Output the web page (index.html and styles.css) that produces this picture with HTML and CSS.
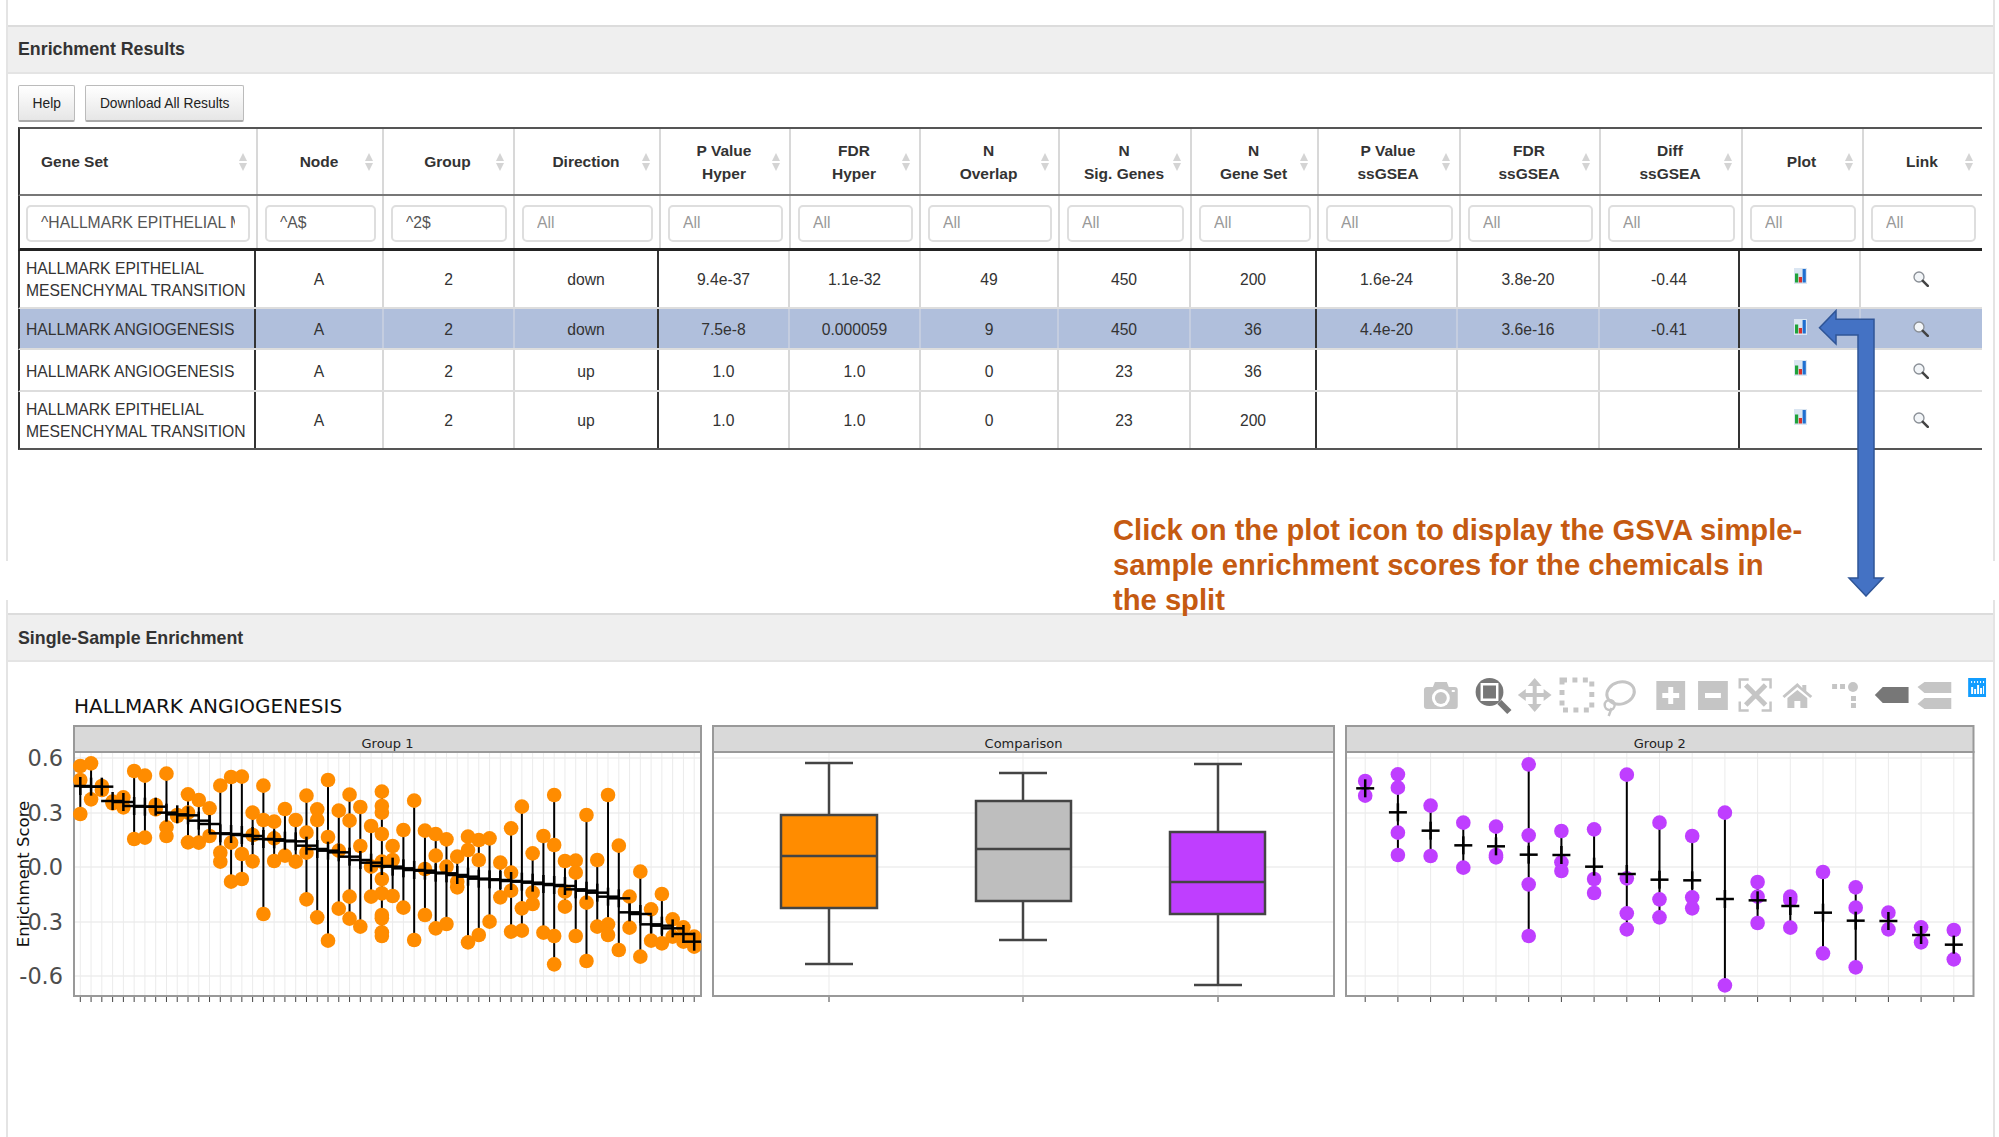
FILE: index.html
```html
<!DOCTYPE html>
<html lang="en">
<head>
    <meta charset="UTF-8">
    <title>Enrichment Results</title>
    <link rel="stylesheet" href="styles.css">
</head>
<body>

    <div class="panel panel-top">
        <div class="panel-heading">Enrichment Results</div>
        <div class="panel-body">
            <div class="btn-row">
                <button class="btn">Help</button>
                <button class="btn">Download All Results</button>
            </div>

            <div class="dt">
                <div class="dt-head">
                    <div class="th th-left sort">Gene Set</div>
                    <div class="th sort">Node</div>
                    <div class="th sort">Group</div>
                    <div class="th sort">Direction</div>
                    <div class="th sort">P Value<br>Hyper</div>
                    <div class="th sort">FDR<br>Hyper</div>
                    <div class="th sort">N<br>Overlap</div>
                    <div class="th sort">N<br>Sig. Genes</div>
                    <div class="th sort">N<br>Gene Set</div>
                    <div class="th sort">P Value<br>ssGSEA</div>
                    <div class="th sort">FDR<br>ssGSEA</div>
                    <div class="th sort">Diff<br>ssGSEA</div>
                    <div class="th sort">Plot</div>
                    <div class="th sort">Link</div>
                </div>
                <div class="dt-head dt-filter">
                    <div class="fc"><input class="fi fi-wide" value="^HALLMARK EPITHELIAL MESENCHYMAL TRANSITION$"></div>
                    <div class="fc"><input class="fi" value="^A$"></div>
                    <div class="fc"><input class="fi" value="^2$"></div>
                    <div class="fc"><input class="fi" placeholder="All"></div>
                    <div class="fc"><input class="fi" placeholder="All"></div>
                    <div class="fc"><input class="fi" placeholder="All"></div>
                    <div class="fc"><input class="fi" placeholder="All"></div>
                    <div class="fc"><input class="fi" placeholder="All"></div>
                    <div class="fc"><input class="fi" placeholder="All"></div>
                    <div class="fc"><input class="fi" placeholder="All"></div>
                    <div class="fc"><input class="fi" placeholder="All"></div>
                    <div class="fc"><input class="fi" placeholder="All"></div>
                    <div class="fc"><input class="fi" placeholder="All"></div>
                    <div class="fc"><input class="fi" placeholder="All"></div>
                </div>

                <div class="dt-row row-tall">
                    <div class="td td-left">HALLMARK EPITHELIAL MESENCHYMAL TRANSITION</div>
                    <div class="td">A</div><div class="td">2</div><div class="td">down</div>
                    <div class="td">9.4e-37</div><div class="td">1.1e-32</div><div class="td">49</div><div class="td">450</div><div class="td">200</div>
                    <div class="td">1.6e-24</div><div class="td">3.8e-20</div><div class="td">-0.44</div>
                    <div class="td"><svg class="ico-plot" viewBox="0 0 13 16"><use href="#plot-icon"/></svg></div>
                    <div class="td"><svg class="ico-find" viewBox="0 0 16 16"><use href="#find-icon"/></svg></div>
                </div>
                <div class="dt-row row-sel">
                    <div class="td td-left">HALLMARK ANGIOGENESIS</div>
                    <div class="td">A</div><div class="td">2</div><div class="td">down</div>
                    <div class="td">7.5e-8</div><div class="td">0.000059</div><div class="td">9</div><div class="td">450</div><div class="td">36</div>
                    <div class="td">4.4e-20</div><div class="td">3.6e-16</div><div class="td">-0.41</div>
                    <div class="td"><svg class="ico-plot" viewBox="0 0 13 16"><use href="#plot-icon"/></svg></div>
                    <div class="td"><svg class="ico-find" viewBox="0 0 16 16"><use href="#find-icon"/></svg></div>
                </div>
                <div class="dt-row row-short">
                    <div class="td td-left">HALLMARK ANGIOGENESIS</div>
                    <div class="td">A</div><div class="td">2</div><div class="td">up</div>
                    <div class="td">1.0</div><div class="td">1.0</div><div class="td">0</div><div class="td">23</div><div class="td">36</div>
                    <div class="td"></div><div class="td"></div><div class="td"></div>
                    <div class="td"><svg class="ico-plot" viewBox="0 0 13 16"><use href="#plot-icon"/></svg></div>
                    <div class="td"><svg class="ico-find" viewBox="0 0 16 16"><use href="#find-icon"/></svg></div>
                </div>
                <div class="dt-row row-tall row-last">
                    <div class="td td-left">HALLMARK EPITHELIAL MESENCHYMAL TRANSITION</div>
                    <div class="td">A</div><div class="td">2</div><div class="td">up</div>
                    <div class="td">1.0</div><div class="td">1.0</div><div class="td">0</div><div class="td">23</div><div class="td">200</div>
                    <div class="td"></div><div class="td"></div><div class="td"></div>
                    <div class="td"><svg class="ico-plot" viewBox="0 0 13 16"><use href="#plot-icon"/></svg></div>
                    <div class="td"><svg class="ico-find" viewBox="0 0 16 16"><use href="#find-icon"/></svg></div>
                </div>
            </div>
        </div>
    </div>

    <div class="panel panel-bottom">
        <div class="panel-heading">Single-Sample Enrichment</div>
        <div class="plot">
            <svg id="plot" class="plot-svg" viewBox="8 664 1985 360"></svg>

            <svg class="modebar" viewBox="0 0 575 45" preserveAspectRatio="none">
                <!-- camera -->
                <path class="mb" d="M4 15q0-3 3-3h6l2-5h12l2 5h6q3 0 3 3v16q0 3-3 3H7q-3 0-3-3z"/>
                <circle cx="21" cy="23" r="9" fill="#fff"/>
                <circle class="mb" cx="21" cy="23" r="6"/>
                <rect x="32" y="15" width="3" height="2" fill="#fff"/>
                <!-- zoom, active -->
                <circle class="mb-on" cx="70" cy="17" r="14"/>
                <rect x="61" y="8" width="18" height="18" fill="#fff"/>
                <rect class="mb-on" x="63.500" y="10.500" width="13" height="13"/>
                <path d="M80 27l10 10" stroke="#777" stroke-width="6" fill="none"/>
                <!-- pan -->
                <path class="mb" d="M115.500 3l7 8h-5v7h7v-4l8 6-8 6v-4h-7v7h5l-7 8-7-8h5v-7h-7v4l-8-6 8-6v4h7v-7h-5z"/>
                <!-- box select -->
                <rect x="143" y="5" width="30" height="30" fill="none" stroke="#c5c5c5" stroke-width="5" stroke-dasharray="5 5.500"/>
                <!-- lasso -->
                <ellipse cx="202" cy="18" rx="14" ry="11" transform="rotate(-15 202 18)" fill="none" stroke="#c5c5c5" stroke-width="3"/>
                <circle cx="191" cy="30" r="5" fill="none" stroke="#c5c5c5" stroke-width="2.500"/>
                <path d="M193 33l-3 8" stroke="#c5c5c5" stroke-width="2.500" fill="none"/>
                <!-- zoom in, zoom out -->
                <path class="mb" d="M238 6h29v29h-29z"/>
                <path d="M250 12h5v6h6v5h-6v6h-5v-6h-6v-5h6z" fill="#fff"/>
                <path class="mb" d="M280 6h30v29h-30z"/>
                <path d="M287 18h16v5h-16z" fill="#fff"/>
                <!-- autoscale -->
                <path d="M331 4.500h-9v9M344 4.500h9v9M331 35.500h-9v-9M344 35.500h9v-9" fill="none" stroke="#c5c5c5" stroke-width="2.500"/>
                <path d="M328 10l20 20M348 10l-20 20" stroke="#c5c5c5" stroke-width="5" fill="none"/>
                <!-- home -->
                <path class="mb" d="M380 8l-15 13 2 2 13-11 13 11 2-2-6-5v-6h-4v3zM370 23l10-8 10 8v10h-7v-7h-6v7h-7z"/>
                <!-- spikes -->
                <circle class="mb" cx="436" cy="12" r="5"/>
                <path class="mb" d="M415 9h5v5h-5zM423 9h5v5h-5zM434 21h5v5h-5zM434 28h5v5h-5z"/>
                <!-- hover closest, compare -->
                <path class="mb-on" d="M458 20l8-8h26v16h-26z"/>
                <path class="mb" d="M501 12l7-5h27v11h-27zM501 29l7-6h27v11h-27z"/>
                <!-- plotly logo -->
                <rect x="552" y="3" width="18" height="19" fill="#119dff"/>
                <path d="M555 6h1v2h-1zM558 6h1v2h-1zM561 6h1v2h-1zM564 6h1v2h-1zM567 6h1v2h-1zM555 12h2v7h-2zM558 14h2v5h-2zM561 10h2v9h-2zM564 13h2v6h-2zM567 11h1v8h-1z" fill="#fff"/>
            </svg>
        </div>
    </div>

    <!-- notes pasted over the screenshot -->
    <svg class="note-arrow" viewBox="0 0 70 296">
        <path d="M19 18.300H57V277h9l-17 18-17-18h9V34H19v9L2.500 26.700 19 9.700z" fill="#4472c4" stroke="#2f5597" stroke-width="1.500"/>
    </svg>
    <div class="note-text">Click on the plot icon to display the GSVA simple-sample enrichment scores for the chemicals in the split</div>

    <svg class="defs" width="0" height="0">
        <symbol id="plot-icon" viewBox="0 0 13 16">
            <rect width="13" height="16" fill="#dbe6f2"/>
            <rect x="1" y="5.500" width="3.200" height="9" fill="#1fa33b"/>
            <rect x="4.800" y="9" width="3.200" height="5.500" fill="#d9322a"/>
            <rect x="8.600" y="1" width="3.200" height="13.500" fill="#1f6fd0"/>
        </symbol>
        <symbol id="find-icon" viewBox="0 0 16 16">
            <circle cx="6" cy="6" r="5" fill="#f2f5f8" stroke="#8a8f96" stroke-width="1.300"/>
            <path d="M9.800 9.800l5 5" stroke="#444" stroke-width="2.600" stroke-linecap="round"/>
        </symbol>
    </svg>

    <script src="plot.js"></script>
</body>
</html>
```
FILE: styles.css
```css
html, body {
    margin: 0;
    padding: 0;
    background: #fff;
}
body {
    position: relative;
    height: 1137px;
    overflow: hidden;
    font-family: "Liberation Sans", Arial, sans-serif;
    color: #333;
}

.panel {
    margin: 0 4px 0 6px;
    border-left: 2px solid #e4e4e4;
    border-right: 2px solid #e4e4e4;
}
.panel-top {
    height: 561px;
    padding-top: 25px;
    box-sizing: border-box;
}
.panel-bottom {
    margin-top: 39px;
    height: 537px;
    padding-top: 13px;
    box-sizing: border-box;
}
.panel-heading {
    height: 49px;
    line-height: 45px;
    padding-left: 10px;
    box-sizing: border-box;
    background: #efefef;
    border-top: 2px solid #dcdcdc;
    border-bottom: 2px solid #e4e4e4;
    font-size: 17.800px;
    font-weight: bold;
}
.panel-bottom .panel-heading {
    line-height: 46px;
}
.panel-body {
    padding: 11px 0 0 10px;
}

.btn-row {
    display: flex;
    gap: 10px;
    height: 42px;
}
.btn {
    height: 37px;
    padding: 0 13.500px;
    font-family: inherit;
    font-size: 13.800px;
    color: #222;
    background: linear-gradient(#fff, #e6e6e6);
    border: 1px solid #bbb;
    border-bottom: 2px solid #aaa;
    border-radius: 2px;
}

.dt {
    width: 1964px;
    font-size: 15.700px;
}
.dt-head, .dt-row {
    display: grid;
    border-left: 2px solid #333;
    box-sizing: border-box;
}
.dt-head {
    grid-template-columns: 238px 126px 131px 146px 130px 130px 139px 132px 127px 142px 140px 142px 121px 118px;
    height: 69px;
    border-top: 2px solid #555;
    border-bottom: 2px solid #777;
}
.dt-filter {
    height: 55px;
    border-top: 0;
    border-bottom: 3px solid #222;
}
.dt-row {
    grid-template-columns: 236px 128px 131px 144px 131px 131px 138px 132px 126px 141px 142px 140px 121px 121px;
    border-bottom: 2px solid #ddd;
}
.row-tall { height: 58px; }
.row-sel { height: 41px; background: #b0bfdc; }
.row-short { height: 42px; }
.row-last { border-bottom-color: #555; }

.th {
    position: relative;
    display: flex;
    align-items: center;
    justify-content: center;
    text-align: center;
    padding: 2px 2px 0 0;
    font-weight: bold;
    font-size: 15.500px;
    line-height: 22.500px;
    border-right: 2px solid #d8d8d8;
}
.th:last-child, .fc:last-child { border-right: 0; }
.th-left {
    justify-content: flex-start;
    padding-left: 21px;
}
.sort::before, .sort::after {
    content: "";
    position: absolute;
    right: 9px;
    width: 0;
    height: 0;
    border-left: 4px solid transparent;
    border-right: 4px solid transparent;
}
.sort::before {
    top: calc(50% - 9px);
    border-bottom: 8px solid #d4d4d4;
}
.sort::after {
    top: calc(50% + 1px);
    border-top: 8px solid #d4d4d4;
}

.fc {
    display: flex;
    align-items: center;
    padding: 0 6px 0 7px;
    min-width: 0;
    border-right: 2px solid #d8d8d8;
}
.fc:first-child { padding-left: 6px; }
.fi {
    width: 100%;
    min-width: 0;
    height: 37px;
    margin-top: 2px;
    padding: 0 13px;
    box-sizing: border-box;
    font-family: inherit;
    font-size: 15.700px;
    color: #555;
    background: #fff;
    border: 2px solid #dedede;
    border-radius: 5px;
}
.fi::placeholder { color: #999; }

.td {
    display: flex;
    align-items: center;
    justify-content: center;
    text-align: center;
    padding-top: 2px;
    line-height: 22.500px;
    border-right: 2px solid #d8d8d8;
}
.row-sel .td, .row-short .td { padding-top: 4px; }
.td:last-child { border-right: 0; }
.td:nth-child(1), .td:nth-child(4), .td:nth-child(9), .td:nth-child(12) {
    border-right-color: #333;
}
.td-left {
    justify-content: flex-start;
    text-align: left;
    padding-left: 6px;
}
.row-sel .td { border-right-color: #c4cde0; }
.row-sel .td:nth-child(1), .row-sel .td:nth-child(4), .row-sel .td:nth-child(9), .row-sel .td:nth-child(12) {
    border-right-color: #333;
}

.ico-plot {
    width: 13px;
    height: 16px;
    margin: -8px 0 0 2px;
}
.ico-find {
    width: 16px;
    height: 16px;
    margin: -3px 2px 0 0;
}

.plot {
    position: relative;
    height: 360px;
    margin-top: 2px;
}
.plot-svg {
    display: block;
    width: 1985px;
    height: 360px;
}
.modebar {
    position: absolute;
    left: 1412px;
    top: 11px;
    width: 571px;
    height: 45px;
}
.mb { fill: #c5c5c5; }
.mb-on { fill: #777; }

.note-arrow {
    position: absolute;
    left: 1817px;
    top: 301px;
    width: 70px;
    height: 296px;
}
.note-text {
    position: absolute;
    left: 1113px;
    top: 513px;
    width: 695px;
    font-size: 29.200px;
    font-weight: bold;
    line-height: 35px;
    color: #c55a11;
}
.defs {
    position: absolute;
}
```
FILE: plot.js
```js
// single-sample scores, read as y pixels inside each facet
const group1 = [
    [[258, 300, 402], 318], [[250, 358], 320], [[318, 330], 320], [[365, 370], 363], [[352, 382], 366],
    [[273, 477], 378], [[287, 473], 380], [[375, 388], 380], [[281, 442, 468], 398], [[405, 408], 403],
    [[343, 398, 487], 406], [[360, 488], 422], [[385, 468], 432], [[317, 518, 545], 460], [[291, 488, 605], 462],
    [[290, 522, 597], 465], [[398, 465, 544], 468], [[317, 420, 702], 477], [[425, 475, 543], 478], [[387, 527], 482],
    [[420, 545], 484], [[347, 458, 518, 658], 497], [[388, 420, 712], 507], [[300, 471, 782], 512], [[392, 512, 686], 517],
    [[344, 422, 650, 716], 530], [[381, 498, 740], 540], [[438, 560, 650], 548],
    [[335, 378, 398, 462, 545, 597, 640, 705, 715, 757, 768], 558], [[498, 540, 648], 560],
    [[450, 683], 565], [[362, 780], 570], [[452, 567, 705], 572], [[462, 527, 745], 578], [[478, 560, 732], 580],
    [[530, 605, 622], 585], [[470, 510, 787], 590], [[480, 540, 765], 596], [[475, 725], 598], [[548, 652], 600],
    [[445, 578, 632, 755], 603], [[380, 685, 752], 605], [[520, 638, 672], 608], [[468, 758], 612], [[345, 495, 768, 853], 615],
    [[543, 635, 680], 618], [[542, 578, 768], 628], [[405, 668, 843], 632], [[540, 740], 638], [[345, 733, 765], 650],
    [[497, 810], 655], [[650, 743], 697], [[575, 830], 702], [[688, 782], 733], [[642, 790], 737],
    [[718, 770], 745], [[742, 785], 762], [[770, 800], 785]
];
const group2 = [
    [[183, 227], 205], [[163, 203, 338, 405], 277], [[257, 408], 332], [[308, 443], 376], [[320, 405, 412], 379],
    [[133, 346, 493, 648], 404], [[333, 427, 453], 405], [[328, 477, 519], 440], [[164, 475, 580, 628], 462], [[308, 538, 592], 479],
    [[348, 532, 565], 481], [[278, 796], 537], [[486, 530, 609], 541], [[530, 540, 623], 558], [[456, 700], 578],
    [[502, 563, 742], 602], [[578, 628], 603], [[622, 667], 645], [[630, 718], 674]
];
const boxes = [
    { cx: 829, x0: 781, x1: 877, top: 815, bot: 908, med: 856, hi: 763, lo: 964, fill: "#ff8c00" },
    { cx: 1023, x0: 976, x1: 1071, top: 801, bot: 901, med: 849, hi: 773, lo: 940, fill: "#bebebe" },
    { cx: 1218, x0: 1170, x1: 1265, top: 832, bot: 914, med: 882, hi: 764, lo: 985, fill: "#bf3eff" }
];
const yTicks = [758, 813, 867, 922, 976];

const svg = document.getElementById("plot");
const NS = "http://www.w3.org/2000/svg";

function add(tag, attrs, text) {
    const el = document.createElementNS(NS, tag);
    for (const k in attrs) el.setAttribute(k, attrs[k]);
    if (text) el.textContent = text;
    svg.appendChild(el);
    return el;
}
function line(x1, y1, x2, y2, stroke, width) {
    add("line", { x1, y1, x2, y2, stroke, "stroke-width": width });
}

function facet(x0, x1, label, xs) {
    yTicks.forEach(y => line(x0, y, x1, y, "#f2f2f2", 2));
    xs.forEach(x => {
        line(x, 752, x, 996, "#ebebeb", 1);
        line(x, 996, x, 1002, "#444", 1);
    });
    add("rect", { x: x0, y: 726, width: x1 - x0, height: 26, fill: "#d9d9d9", stroke: "#999", "stroke-width": 2 });
    add("rect", { x: x0, y: 752, width: x1 - x0, height: 244, fill: "none", stroke: "#999", "stroke-width": 2 });
    add("text", {
        x: (x0 + x1) / 2, y: 748, "text-anchor": "middle", "font-family": "DejaVu Sans", "font-size": 13, fill: "#222"
    }, label);
}

function scatter(data, xs, yOf, color, half, x0, x1) {
    data.forEach((d, i) => {
        const ys = d[0].map(yOf);
        line(xs[i], Math.min(...ys), xs[i], Math.max(...ys), "#000", 2);
    });
    data.forEach((d, i) => {
        d[0].forEach(z => add("circle", { cx: xs[i], cy: yOf(z), r: 7.3, fill: color }));
    });
    data.forEach((d, i) => {
        const m = yOf(d[1]);
        // the crossbars stop at the facet edge
        line(Math.max(xs[i] - half, x0), m, Math.min(xs[i] + half, x1), m, "#000", 2.5);
        line(xs[i], m - 9, xs[i], m + 9, "#000", 2.5);
    });
}

// facets
const xs1 = group1.map((d, i) => 80.3 + 10.77 * i);
const xs2 = group2.map((d, i) => 1365.2 + 32.7 * i);
facet(74, 701, "Group 1", xs1);
facet(713, 1334, "Comparison", boxes.map(b => b.cx));
facet(1346, 1973.5, "Group 2", xs2);

scatter(group1, xs1, z => 680 + z / 3, "#ff8c00", 11.5, 74, 701);
scatter(group2, xs2, z => 720 + z / 3, "#bf3eff", 9, 1346, 1973.5);

boxes.forEach(b => {
    line(b.cx, b.hi, b.cx, b.lo, "#444", 2.5);
    line(b.cx - 24, b.hi, b.cx + 24, b.hi, "#444", 2.5);
    line(b.cx - 24, b.lo, b.cx + 24, b.lo, "#444", 2.5);
    add("rect", { x: b.x0, y: b.top, width: b.x1 - b.x0, height: b.bot - b.top, fill: b.fill, stroke: "#444", "stroke-width": 2.5 });
    line(b.x0, b.med, b.x1, b.med, "#444", 2.5);
});

// axis text
["0.6", "0.3", "0.0", "-0.3", "-0.6"].forEach((t, i) => {
    add("text", {
        x: 63, y: yTicks[i] + 8, "text-anchor": "end", "font-family": "DejaVu Sans", "font-size": 22.4, fill: "#4d4d4d"
    }, t);
});
add("text", {
    x: 29, y: 874, transform: "rotate(-90 29 874)", "text-anchor": "middle", "font-family": "DejaVu Sans", "font-size": 16.5, fill: "#111"
}, "Enrichment Score");
add("text", {
    x: 74, y: 713, "font-family": "DejaVu Sans", "font-size": 20, fill: "#111"
}, "HALLMARK ANGIOGENESIS");
```
